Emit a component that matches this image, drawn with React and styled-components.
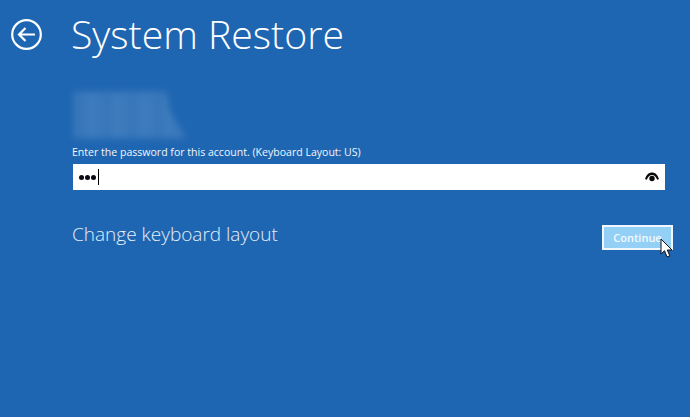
import React from 'react'
import styled, { createGlobalStyle } from 'styled-components'

const GlobalStyle = createGlobalStyle`
  html, body {
    margin: 0;
    padding: 0;
    background: #1f66b2;
  }
  body {
    font-family: "Open Sans", "Liberation Sans", sans-serif;
    overflow: hidden;
  }
`

const Page = styled.div`
  width: 690px;
  height: 417px;
  background: #1f66b2;
  color: #fff;
  display: flex;
  box-sizing: border-box;
  padding: 0 17px 0 11px;
  overflow: hidden;
`

const BackButton = styled.button`
  width: 31px;
  height: 31px;
  margin: 19px 30px 0 0;
  padding: 0;
  flex: none;
  border: none;
  background: none;
  color: #fff;
  svg {
    display: block;
  }
`

const Main = styled.main`
  flex: 1;
  min-width: 0;
  display: flex;
  flex-direction: column;
`

const Title = styled.h1`
  margin: 8px 0 0 -1px;
  font-size: 39.2px;
  line-height: 52px;
  font-weight: 300;
`

const BlurredName = styled.div`
  width: 120px;
  height: 50px;
  margin: 30px 0 0 -2px;
  filter: blur(3px);
`

const BlurredLines = styled.div`
  height: 100%;
  background: repeating-linear-gradient(90deg, #3b79bb 0 9px, #3674b9 9px 14px, #3d7bbc 14px 26px);
  clip-path: polygon(3% 3%, 80% 3%, 84% 45%, 97% 97%, 3% 97%);
`

const Label = styled.label`
  margin-top: 4px;
  font-size: 10.55px;
  line-height: 16px;
  color: #f2f6fb;
`

const PasswordBox = styled.div`
  width: 592px;
  height: 26px;
  margin: 4px 0 0 1px;
  box-sizing: border-box;
  padding: 0 6px 0 6px;
  background: #fff;
  color: #000;
  display: flex;
  align-items: center;
  justify-content: space-between;
`

const Dots = styled.div`
  display: flex;
  align-items: center;
  gap: 1px;
`

const Dot = styled.span`
  width: 5px;
  height: 5px;
  border-radius: 50%;
  background: #0a0a14;
`

const Caret = styled.span`
  width: 1px;
  height: 16px;
  margin-left: 1px;
  background: #000;
`

const Actions = styled.div`
  margin-top: 35px;
  display: flex;
  align-items: flex-start;
  justify-content: space-between;
`

const LayoutLink = styled.a`
  font-size: 19px;
  line-height: 28px;
  margin-top: -5px;
  font-weight: 300;
  color: #e6eef7;
`

const ContinueWrap = styled.div`
  position: relative;
`

const ContinueButton = styled.button`
  width: 71px;
  height: 25px;
  padding: 0;
  box-sizing: border-box;
  border: 2px solid #f0f8fe;
  background: #94d0f6;
  color: #f2faff;
  font-family: inherit;
  font-size: 11px;
  font-weight: 600;
  display: block;
`

const Pointer = styled.svg`
  position: absolute;
  left: 58px;
  top: 13px;
`

export default function App() {
  return (
    <Page>
      <GlobalStyle />
      <BackButton aria-label="Back">
        <svg width="31" height="31" viewBox="0 0 31 31" fill="none" stroke="currentColor">
          <circle cx="15.5" cy="15.5" r="14.3" strokeWidth="2.2" />
          <path d="M24 15.5H8M14.5 9 8 15.5l6.5 6.5" strokeWidth="2.2" />
        </svg>
      </BackButton>
      <Main>
        <Title>System Restore</Title>
        <BlurredName>
          <BlurredLines />
        </BlurredName>
        <Label>Enter the password for this account. (Keyboard Layout: US)</Label>
        <PasswordBox>
          <Dots>
            <Dot />
            <Dot />
            <Dot />
            <Caret />
          </Dots>
          <svg width="14" height="10" viewBox="0 0 14 10">
            <path
              fill="#0a0a0a"
              d="M0 7C1.5 2.500 4 .5 7 .5S12.500 2.500 14 7l-1.800.8C11 4.500 9.200 3 7 3S3 4.500 1.800 7.800Z"
            />
            <circle cx="7" cy="6.500" r="2.700" fill="#0a0a0a" />
          </svg>
        </PasswordBox>
        <Actions>
          <LayoutLink>Change keyboard layout</LayoutLink>
          <ContinueWrap>
            <ContinueButton>Continue</ContinueButton>
            <Pointer width="14" height="21" viewBox="0 0 14 21">
              <path
                d="M1 1v15l3.500-3.300L7 19l2.800-1.200-2.500-5.800H12Z"
                fill="#fff"
                stroke="#111"
                strokeWidth="1"
              />
            </Pointer>
          </ContinueWrap>
        </Actions>
      </Main>
    </Page>
  )
}
